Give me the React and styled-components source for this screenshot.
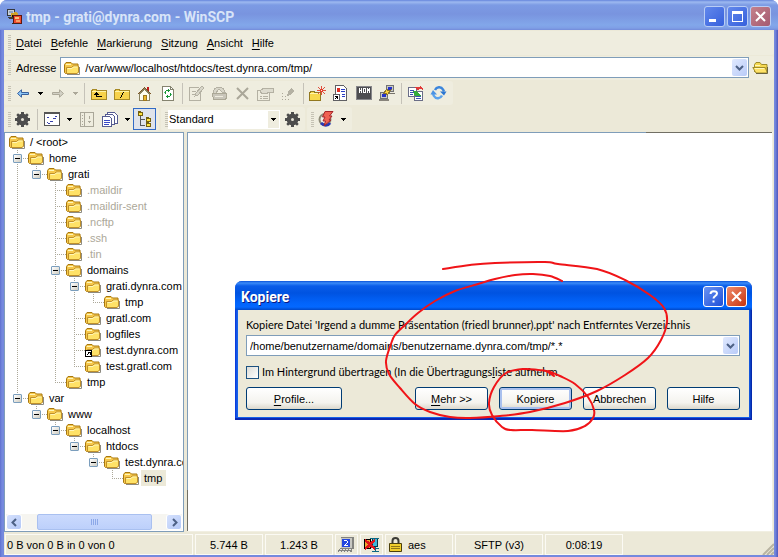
import React from 'react';
import styled, { createGlobalStyle, css } from 'styled-components';

const GlobalStyle = createGlobalStyle`
  * { box-sizing: border-box; }
  html, body { margin: 0; padding: 0; background: #fff; }
  body, button, input, select {
    font-family: "Liberation Sans", Arial, sans-serif;
    font-size: 11px;
    line-height: 14px;
    color: #000;
  }
  button, input, select { margin: 0; padding: 0; border: 0; background: none; outline: none; }
  svg { display: block; flex: none; }
`;

/* ---------- window frame ---------- */

const Window = styled.div`
  display: flex;
  flex-direction: column;
  min-height: 100vh;
  padding: 0 4px 2px;
  overflow: hidden;
  border-radius: 7px 7px 0 0;
  background: linear-gradient(90deg, #5f70cf 0, #7589de 2px, #7589de calc(100% - 3px), #5158bd 100%);
`;

const TitleBar = styled.header`
  display: flex;
  align-items: center;
  height: 30px;
  margin: 0 -4px;
  padding: 3px 7px 0 6px;
  gap: 2px;
  background: linear-gradient(#6585dc 0, #9db9f0 2px, #7c9be4 5px, #7994df 14px, #82a7ea 25px, #7f9fe6 28px, #738bda 30px);
`;

const WindowTitle = styled.h1`
  flex: 1;
  margin: 0 0 0 1px;
  font: bold 14px/18px Roboto, sans-serif;
  color: #d8e4f8;
`;

const CaptionButton = styled.button`
  display: grid;
  place-items: center;
  width: 21px;
  height: 21px;
  border: 1px solid ${(p) => (p.$active ? '#fff' : '#b9cdf5')};
  border-radius: 3px;
  background: ${(p) => p.$fill};
`;

const Chrome = styled.div`
  flex: 1;
  display: flex;
  flex-direction: column;
  background: #ece9d8;
`;

/* ---------- bars ---------- */

const Bar = styled.div`
  display: flex;
  align-items: center;
  height: ${(p) => p.$height}px;
  gap: 2px;
`;

const Group = styled.div`
  display: flex;
  align-items: center;
  height: 24px;
  padding-right: ${(p) => p.$end || 3}px;
  flex: ${(p) => (p.$wide ? '1' : 'none')};
  min-width: 0;
  border-radius: 3px;
  background: #efeddf;
`;

const Grip = styled.span`
  flex: none;
  width: 3px;
  height: 15px;
  margin: 0 0 0 4px;
  background: repeating-linear-gradient(#c5c2b4 0 1px, transparent 1px 2px);
`;

const Menu = styled.nav`
  display: flex;
  gap: 9px;
  padding-left: 5px;
`;

const MenuItem = styled.button`
  font-size: 11px;
  u { text-underline-offset: 2px; }
`;

const ToolButton = styled.button`
  display: grid;
  place-items: center;
  flex: none;
  width: ${(p) => (p.$narrow ? 12 : 23)}px;
  height: 22px;
  ${(p) => p.$pressed && css`
    border: 1px solid #316ac5;
    background: #dfe3ea;
  `}
`;

const Separator = styled.span`
  flex: none;
  width: 1px;
  height: 21px;
  margin: 0 2px 0 3px;
  background: #c5c2b8;
`;

const AddressLabel = styled.label`
  padding: 0 4px 0 5px;
`;

const ComboBox = styled.div`
  display: flex;
  align-items: center;
  flex: 1;
  min-width: 0;
  height: 21px;
  padding: 1px;
  border: 1px solid #7f9db9;
  background: #fff;
`;

const ComboInput = styled.input`
  flex: 1;
  min-width: 0;
  padding-left: ${(p) => p.$inset}px;
`;

const DropButton = styled.button`
  display: grid;
  place-items: center;
  width: 15px;
  height: 17px;
  border-radius: 2px;
  background: linear-gradient(135deg, #e0e9fe, #b9cbf8);
`;

const SelectBox = styled.div`
  display: grid;
  grid-template-columns: 100px 11px;
  height: 19px;
  margin-right: 1px;
  border: 1px solid #fff;
  border-left: 0;
  background: #efeddf;
  > select { grid-area: 1 / 1 / 2 / 3; appearance: none; padding-left: 1px; background: linear-gradient(90deg, #fff 100px, #efeddf 100px); }
  > svg { grid-area: 1 / 2; place-self: center; pointer-events: none; }
`;

/* ---------- panes ---------- */

const Panes = styled.main`
  flex: 1;
  display: grid;
  grid-template-columns: 180px 1fr;
  column-gap: 3px;
  margin-bottom: 2px;
`;

const TreePane = styled.aside`
  display: flex;
  flex-direction: column;
  justify-content: space-between;
  min-width: 0;
  padding: 1px;
  overflow: hidden;
  border: 1px solid #7f9db9;
  background: #fff;
`;

const Tree = styled.ul`
  margin: 0;
  padding: 0 0 0 3px;
  list-style: none;
`;

const TreeRow = styled.li`
  display: flex;
  align-items: center;
  height: 16px;
`;

const Guide = styled.span`
  position: relative;
  flex: none;
  display: grid;
  place-items: center start;
  width: 19px;
  height: 16px;
  padding-left: 4px;
  &::before {
    content: "";
    display: ${(p) => (p.$kind === ' ' ? 'none' : 'block')};
    position: absolute;
    left: 8px;
    top: 0;
    width: 1px;
    height: ${(p) => (p.$kind === 'L' ? 8 : 16)}px;
    background: repeating-linear-gradient(#aca899 0 1px, transparent 1px 2px);
  }
  &::after {
    content: "";
    display: ${(p) => (p.$kind === 'L' || p.$kind === 'T' ? 'block' : 'none')};
    position: absolute;
    left: 8px;
    top: 8px;
    width: 11px;
    height: 1px;
    background: repeating-linear-gradient(90deg, #aca899 0 1px, transparent 1px 2px);
  }
`;

const Expander = styled.button`
  position: relative;
  z-index: 1;
  display: grid;
  place-items: center;
  width: 9px;
  height: 9px;
  border: 1px solid #7b9ebd;
  border-radius: 1px;
  background: linear-gradient(135deg, #fff, #cfccc0);
  &::after { content: ""; width: 5px; height: 1px; background: #000; }
`;

const TreeName = styled.span`
  margin-left: 2px;
  padding: 1px 4px 1px 3px;
  white-space: nowrap;
  color: ${(p) => (p.$hidden ? '#aca899' : '#000')};
  background: ${(p) => (p.$selected ? '#ece9d8' : 'transparent')};
`;

const ScrollBar = styled.div`
  display: flex;
  justify-content: space-between;
  height: 16px;
  background: #f6f5f0;
`;

const ScrollButton = styled.button`
  display: grid;
  place-items: center;
  width: 16px;
  border: 1px solid #fff;
  border-radius: 3px;
  background: linear-gradient(135deg, #d5e1fd, #b5c9f7);
`;

const ScrollTrack = styled.div`
  flex: 1;
  display: grid;
  padding: 0 14px 0 15px;
`;

const ScrollThumb = styled.div`
  display: grid;
  place-items: center;
  border: 1px solid #a9c0f0;
  border-radius: 2px;
  background: linear-gradient(#cbdafd, #bdd0fb);
`;

const FilePane = styled.section`
  position: relative;
  min-width: 0;
  margin-right: 1px;
  border: 1px solid #f1efe2;
  border-width: 0 1px 1px 0;
  background:
    linear-gradient(#7f9db9 calc(100% - 41px), #716f64 0) left / 1px 100% no-repeat,
    linear-gradient(90deg, #7f9db9 calc(100% - 126px), #716f64 0) top / 100% 1px no-repeat,
    #fff;
`;

const StatusBar = styled.footer`
  display: flex;
  height: 21px;
  gap: 2px;
  padding-left: 1px;
`;

const StatusCell = styled.span`
  display: flex;
  align-items: center;
  justify-content: ${(p) => (p.$left ? 'flex-start' : 'center')};
  gap: 6px;
  flex: none;
  width: ${(p) => p.$width}px;
  padding-left: ${(p) => (p.$left ? p.$left : 0)}px;
  border: 1px solid #fbfaf4;
  white-space: nowrap;
`;

const SizeGrip = styled.span`
  display: flex;
  align-items: flex-end;
  margin-left: auto;
`;

/* ---------- dialog ---------- */

const DialogLayer = styled.div`
  position: absolute;
  left: 48px;
  right: 20px;
  top: 149px;
`;

const Dialog = styled.form`
  padding: 0 3px 3px;
  border-radius: 7px 7px 0 0;
  overflow: hidden;
  background: linear-gradient(90deg, #0831d9 0, #1660e8 2px, #1660e8 calc(100% - 3px), #001ea0 100%);
  box-shadow: inset 0 -2px #0a28b4;
`;

const DialogTitleBar = styled.div`
  display: flex;
  align-items: center;
  height: 29px;
  margin: 0 -3px;
  padding: 2px 5px 0 6px;
  gap: 2px;
  background: linear-gradient(#0a50d8 0, #3b8bf8 2px, #0a5ce8 5px, #0053e1 12px, #0264fb 22px, #0468ff 26px, #0048c8 29px);
`;

const DialogTitle = styled.h2`
  flex: 1;
  margin: 0;
  font: bold 14px/18px Roboto, sans-serif;
  color: #fff;
  text-shadow: 1px 1px #0a1883;
`;

const DialogBody = styled.div`
  display: flex;
  flex-direction: column;
  padding: 8px 9px 7px 8px;
  background: #ece9d8;
`;

const DialogLabel = styled.label`
  margin-bottom: 3px;
  font-family: Lato, "Liberation Sans", sans-serif;
  white-space: nowrap;
`;

const CheckLabel = styled.label`
  display: flex;
  align-items: center;
  gap: 3px;
  margin: 9px 0 8px;
  font-family: Lato, "Liberation Sans", sans-serif;
  white-space: nowrap;
`;

const Check = styled.input`
  appearance: none;
  width: 13px;
  height: 13px;
  border: 1px solid #1c5180;
  background: linear-gradient(135deg, #dcdcd7, #fff);
`;

const Buttons = styled.div`
  display: flex;
  gap: 11px;
`;

const PushButton = styled.button`
  width: ${(p) => (p.$wide ? 96 : 73)}px;
  height: 23px;
  margin-right: ${(p) => (p.$wide ? 'auto' : '0')};
  border: 1px solid #003c74;
  border-radius: 3px;
  background: linear-gradient(#fff, #f4f3ee 70%, #dcd8cc);
  box-shadow: ${(p) => (p.$default ? 'inset 0 0 0 2px #a9c0ee' : 'none')};
  u { text-underline-offset: 2px; }
`;

const Marker = styled.svg`
  position: absolute;
  left: 145px;
  top: -26px;
  pointer-events: none;
`;

/* ---------- icons ---------- */

const Pic = ({ w = 16, h = 16, smooth, children }) => (
  <svg width={w} height={h} viewBox={`0 0 ${w} ${h}`} fill="none" aria-hidden="true" shapeRendering={smooth ? 'auto' : 'crispEdges'}>
    {children}
  </svg>
);

const Folder = ({ link }) => (
  <Pic h={14} smooth>
    <path d="M3 13.5h12.5V6" stroke="#8d8a80" />
    <path d="M.5 11.500V3.500l1.500-2h5l1.500 1.500H14v8.500l-1 1H1.500z" fill="#f6c84c" stroke="#a8780f" />
    <path d="M2.500 12V6.500h5L9 5h5.500v6L13 12.500H2.500z" fill="#ffe267" stroke="#c0902a" />
    <path d="M3.500 7.500h4.500l1.500-1.500h4M2 3.500h5" stroke="#fff6b8" />
    {link && (
      <g shapeRendering="crispEdges">
        <path d="M.5 7.500h6v6h-6z" fill="#fff" stroke="#000" />
        <path d="M2 12l3-3M2.500 9.500H5V12" stroke="#000" />
      </g>
    )}
  </Pic>
);

const OpenFolder = () => (
  <Pic w={17} h={14} smooth>
    <path d="M2.500 11V3.500L4 1.500h4l1.500 2H15v7" fill="#f5d851" stroke="#a08c2a" />
    <path d="M.8 6.500h12.500l2 5.500H4z" fill="#ffe36a" stroke="#a08c2a" />
    <path d="M4 12.500h11.500V6" stroke="#6b6440" />
    <path d="M3 4.500h5M3 7.500h9" stroke="#fff7bb" />
  </Pic>
);

const AppIcon = () => (
  <Pic w={17} h={17}>
    <path d="M1 1h8v6H1z" fill="#c9cfd8" />
    <path d="M1.500 1.500h7v6h-7z" stroke="#35383e" />
    <path d="M3 3h4v2H3z" fill="#8fa2bf" />
    <path d="M2 9h8v2H3z" fill="#403c38" />
    <path d="M5 5l5-1 2 2-3 4-4-1z" fill="#d2a229" />
    <path d="M6 7h4v2H6z" fill="#17140e" />
    <path d="M7.500 7.500h8v8h-8z" fill="#ef4b2c" stroke="#5d1610" />
    <path d="M9 9h4v2H9z" fill="#f8c07d" />
    <path d="M10 12h4v2h-4z" fill="#f7a068" />
    <path d="M6 15h8v1H6z" fill="#42251e" />
  </Pic>
);

const Caret = ({ dim }) => (
  <Pic w={5} h={3}><path d="M0 0h5v1H0zM1 1h3v1H1zM2 2h1v1H2z" fill={dim ? '#aca899' : '#000'} /></Pic>
);

const Chevron = ({ dir = 'down' }) => (
  <svg width="9" height="9" viewBox="0 0 9 9" aria-hidden="true">
    <path d={{ down: 'M1 3l3.500 3.500L8 3', left: 'M6 1L2.500 4.500 6 8', right: 'M3 1l3.500 3.500L3 8' }[dir]} fill="none" stroke="#4d6185" strokeWidth="2" />
  </svg>
);

const Arrow = ({ right }) => (
  <Pic w={12} h={9} smooth>
    <path
      d={right ? 'M11.500 4.500L7.500.8v2.700H.5v2h7v2.700z' : 'M.5 4.500L4.500.8v2.700h7v2h-7v2.700z'}
      fill={right ? '#d3d1c5' : '#8cc6f8'}
      stroke={right ? '#aca899' : '#38609c'}
    />
  </Pic>
);

const DirFolder = ({ slash }) => (
  <Pic h={13}>
    <path d="M.5 12.500v-9h1v-1h4v1h10v9z" fill="#f7d24b" stroke="#a88a26" />
    <path d="M1 4.500h14" stroke="#fff3a4" />
    {slash ? (
      <path d="M9 5h1v1H9zM8 6h1v2H8zM7 8h1v2H7zM6 10h1v1H6z" fill="#000" />
    ) : (
      <path d="M5 5h1v1H5zM4 6h3v1H4zM3 7h5v1H3zM5 8h1v2H5zM5 9h6v1H5z" fill="#000" />
    )}
  </Pic>
);

const HomeIcon = () => (
  <Pic w={15} h={15}>
    <path d="M10 1h2v4h-2z" fill="#c01818" />
    <path d="M2.500 8v6.500h10V8L7.500 3z" fill="#fffdf0" stroke="#8a815e" />
    <path d="M.5 8.500l7-7 7 7" stroke="#7a5324" />
    <path d="M6.500 9.500h3v5h-3z" fill="#eeb92d" stroke="#9c761e" />
  </Pic>
);

const PageRefresh = () => (
  <Pic w={14} h={15}>
    <path d="M1.500.5h8l3 3v11h-11z" fill="#fff" stroke="#85836f" />
    <path d="M9.500.5v3h3" stroke="#85836f" />
    <path d="M4 5h1v3H4zM5 4h2v1H5zM7 3h1v3H7zM8 4h1v1H8zM9 7h1v3H9zM7 10h2v1H7zM6 9h1v3H6zM5 10h1v1H5z" fill="#169436" />
    <path d="M3 6h1v1H3zM10 8h1v1h-1z" fill="#5cc77a" />
  </Pic>
);

const EditIcon = () => (
  <Pic w={16} h={16}>
    <path d="M9.500 2.500h-9v13h11V8" stroke="#b4b1a3" />
    <path d="M3 6h4M3 9h3" stroke="#b4b1a3" />
    <path d="M6 11l1-3 6-7 2 2-6 7z" stroke="#b4b1a3" fill="#d8d6c9" />
  </Pic>
);

const DocIcon = () => (
  <Pic w={17} h={15}>
    <path d="M2 7c0-4 3-6 6-6s5 2 6 5h-3L8 3 5 7z" fill="#d8d6c9" stroke="#b4b1a3" />
    <path d="M1.500 7.500h14v5l-2 1h-11z" fill="#c9c6ba" stroke="#aba896" />
    <path d="M4 10.500h8" stroke="#efeddf" />
  </Pic>
);

const DeleteIcon = () => (
  <Pic w={13} h={13} smooth><path d="M1 1l11 11M12 1L1 12" stroke="#aaa799" strokeWidth="2" /></Pic>
);

const PropsIcon = () => (
  <Pic w={17} h={15}>
    <path d="M.5 4.500h12v10H.5z" stroke="#b4b1a3" />
    <path d="M3 10.500h2M6 10.500h5M3 12.500h2M6 12.500h5" stroke="#b4b1a3" />
    <path d="M3 5l4-3h9v4h-4l-3 2-2-1-2 1z" fill="#dddbce" stroke="#b4b1a3" />
  </Pic>
);

const PenIcon = () => (
  <Pic w={13} h={13}>
    <path d="M5 9l1-4 3-4 3 3-4 4z" fill="#b4b1a3" />
    <path d="M0 6h1v1H0zM0 9h1v1H0zM0 12h1v1H0zM3 9h1v1H3zM3 12h1v1H3zM6 12h1v1H6z" fill="#aca899" />
  </Pic>
);

const NewFolder = () => (
  <Pic w={17} h={15}>
    <path d="M.5 14.500v-8h1v-1h4v1h6v8z" fill="#f8d94e" stroke="#92781f" />
    <path d="M1 7.500h10" stroke="#fff5ac" />
    <path d="M12 0h1v3h-1zM12 6h1v3h-1zM8 4h3v1H8zM14 4h3v1h-3zM9 1h1v1H9zM10 2h1v1h-1zM15 1h1v1h-1zM14 2h1v1h-1zM9 7h1v1H9zM10 6h1v1h-1zM14 6h1v1h-1zM15 7h1v1h-1z" fill="#e0503e" />
    <path d="M11 3h3v3h-3z" fill="#e23c2c" />
    <path d="M12 4h1v1h-1z" fill="#fff3d8" />
  </Pic>
);

const LinkDoc = () => (
  <Pic w={15} h={16}>
    <path d="M2.500.500h8l3 3v12h-11z" fill="#fff" stroke="#5f5f63" />
    <path d="M4 3h3v4H4z" fill="#e12e22" />
    <path d="M8 4.500h4M8 6.500h4M9 9.500h3M9 11.500h3" stroke="#2b3ec5" />
    <path d="M.500 9.500h6v6h-6z" fill="#fff" stroke="#5f5f63" />
    <path d="M2 13h1v1H2zM3 12h1v1H3zM4 11h1v3H4zM2 11h2v1H2z" fill="#000" />
  </Pic>
);

const Terminal = () => (
  <Pic w={16} h={14}>
    <path d="M.5.5h15v13H.5z" fill="#4e4e52" stroke="#86868a" />
    <path d="M3.500 2v5M5.500 2v5M4 4.500h1M7.500 2v5M9.500 2v5M8 2.500h1M8 6.500h1M11.500 2v5M13.500 2v5M12.500 3v2" stroke="#fff" />
  </Pic>
);

const Putty = () => (
  <Pic w={16} h={16}>
    <path d="M7.500.5h7v6h-7z" fill="#c9c9c5" stroke="#727272" />
    <path d="M9 2h4v3H9z" fill="#2432c8" />
    <path d="M7 8.500h9" stroke="#77736b" />
    <path d="M1.500 7.500h7v6h-7z" fill="#c9c9c5" stroke="#727272" />
    <path d="M3 9h4v3H3z" fill="#2432c8" />
    <path d="M0 15h10" stroke="#88847b" strokeWidth="2" />
    <path d="M5 8l3-4 1 2 3-1-4 5-1-2z" fill="#ffd53a" stroke="#8b7431" />
  </Pic>
);

const SyncIcon = () => (
  <Pic w={16} h={15}>
    <path d="M.5 1.500h8v9h-8zM6.500 5.500h8v9h-8z" fill="#fff" stroke="#6a6d87" />
    <path d="M2 4.500h4M2 6.500h4M2 8.500h3M8 10.500h5M8 12.500h5" stroke="#3b50b2" />
    <path d="M6 1h5l1-1 3 2v3l-2-2-4 1z" fill="#e23a38" />
    <path d="M5 5h4l4 5H7z" fill="#33ad3a" />
  </Pic>
);

const BlueRefresh = () => (
  <Pic w={17} h={16} smooth>
    <path d="M5 5c1.500-3 6-4 8-.5l1 2" stroke="#3c86dc" strokeWidth="2.500" />
    <path d="M12 10.500c-1.500 3-6 4-8 .5l-1-2" stroke="#5ba2ec" strokeWidth="2.500" />
    <path d="M10 6.500h6.500L14 10.500z" fill="#2b76d2" />
    <path d="M.5 9.500H7L3 5z" fill="#4b93e4" />
  </Pic>
);

const Gear = () => (
  <Pic w={15} h={15} smooth>
    <path d="M6 0h3v2l1.500.6L12 1.300 13.700 3l-1.300 1.500L13 6h2v3h-2l-.6 1.500 1.300 1.500-1.700 1.700-1.500-1.300L9 13v2H6v-2l-1.500-.6L3 13.700 1.300 12l1.300-1.500L2 9H0V6h2l.6-1.500L1.300 3 3 1.300l1.500 1.300L6 2z" fill="#4c4c4c" />
    <circle cx="7.500" cy="7.500" r="5.500" fill="#4c4c4c" />
    <circle cx="7.500" cy="7.500" r="1.500" fill="#e4e2d6" />
  </Pic>
);

const QueueIcon = () => (
  <Pic w={16} h={14}>
    <path d="M.5.5h15v13H.5z" fill="#fff" stroke="#555" />
    <path d="M0 1.500h16" stroke="#555" />
    <path d="M3 5h2v1H3zM3 10h1v1H3zM6 9h3v1H6zM9 6h3v1H9zM11 4h2v1h-2zM4 11h2v1H4z" fill="#3841aa" />
  </Pic>
);

const LogIcon = () => (
  <Pic w={14} h={15}>
    <path d="M.5.5h13v14H.5zM4.500 0v15" stroke="#aaa799" />
    <path d="M2 3.500h1M2 6.500h1M2 9.500h1M2 12.500h1M9.500 4v3M9.500 9v2M8 9.500h3" stroke="#aaa799" />
  </Pic>
);

const CopyPages = () => (
  <Pic w={16} h={15}>
    <path d="M5.500.500h7l3 3v8h-10z" fill="#fff" stroke="#555b91" />
    <path d="M3.500 2.500h7l2 2v8h-9z" fill="#fff" stroke="#555b91" />
    <path d="M.5 4.500h7l2 2v8h-9z" fill="#fff" stroke="#555b91" />
    <path d="M2 8.500h6M2 10.500h6M2 12.500h5" stroke="#3949c6" />
  </Pic>
);

const TreeIcon = () => (
  <Pic w={15} h={16}>
    <path d="M3.500 5v9.500H8M3.500 8.500H8" stroke="#585858" />
    <path d="M1 0h2l1 1h2v4H1zM9 6h2l1 1h2v4H9zM9 11h2l1 1h2v4H9z" fill="#75600c" />
    <path d="M2 2h3v2H2zM10 8h3v2h-3zM10 13h3v2h-3z" fill="#ffe43e" />
  </Pic>
);

const Lightning = () => (
  <Pic w={16} h={16} smooth>
    <circle cx="7" cy="8.500" r="5.500" fill="#f2f0e8" stroke="#8c8976" strokeWidth="2" />
    <path d="M3 12c3 3 7 3 9 0" stroke="#2838b5" strokeWidth="3" />
    <path d="M7 .5h8L11.500 5H14l-3 4h2l-7 6 1.500-5H5l2-4H4.500z" fill="#f06253" stroke="#a5252a" />
  </Pic>
);

const Computer = () => (
  <Pic w={17} h={16}>
    <path d="M3 0h13v12h-2v3H0v-2l3-2z" fill="#83837f" />
    <path d="M3 1h11v10H3z" fill="#c8c8c2" />
    <path d="M4 2h8v8H4z" fill="#2347df" />
    <path d="M6 3h3v1H6zM9 4h1v2H9zM8 6h1v1H8zM7 7h1v1H7zM6 8h4v1H6z" fill="#fff" />
    <path d="M2 12.500h12M1 14.500h12" stroke="#e6e6e0" strokeDasharray="2 1" />
  </Pic>
);

const NoCompress = () => (
  <Pic w={17} h={16}>
    <path d="M1.500 2.500h6v9h-6z" fill="#eca82d" stroke="#000" />
    <path d="M9.500 1.500h5v8h-5z" fill="#3fb4d6" stroke="#063a4a" />
    <path d="M7 1.500h9M10 11.500h6M12.500 10v5M9 14.500h7" stroke="#0d6883" />
    <path d="M2 3l10 9M12 3L2 12" stroke="#e0141a" strokeWidth="2.500" />
  </Pic>
);

const Lock = () => (
  <Pic w={13} h={15} smooth>
    <path d="M3.500 7V4c0-4 6-4 6 0v3" stroke="#3c3c36" strokeWidth="2" />
    <path d="M.5 6.500h12v8H.5z" fill="#f1ce2c" stroke="#4a3f0b" />
    <path d="M2 9.500h9M2 11.500h9" stroke="#8f7718" />
  </Pic>
);

/* ---------- data ---------- */

/* Each guide letter is one indent cell: | line, T tee, L elbow; "open" rows end in an expander. */
const rows = [
  { name: '/ <root>', guides: '' },
  { name: 'home', guides: 'T', open: true },
  { name: 'grati', guides: '|L', open: true },
  { name: '.maildir', guides: '| T', hidden: true },
  { name: '.maildir-sent', guides: '| T', hidden: true },
  { name: '.ncftp', guides: '| T', hidden: true },
  { name: '.ssh', guides: '| T', hidden: true },
  { name: '.tin', guides: '| T', hidden: true },
  { name: 'domains', guides: '| T', open: true },
  { name: 'grati.dynra.com', guides: '| |T', open: true },
  { name: 'tmp', guides: '| ||L' },
  { name: 'gratl.com', guides: '| |T' },
  { name: 'logfiles', guides: '| |T' },
  { name: 'test.dynra.com', guides: '| |T', link: true },
  { name: 'test.gratl.com', guides: '| |L' },
  { name: 'tmp', guides: '| L' },
  { name: 'var', guides: 'L', open: true },
  { name: 'www', guides: ' L', open: true },
  { name: 'localhost', guides: '  L', open: true },
  { name: 'htdocs', guides: '   L', open: true },
  { name: 'test.dynra.com', guides: '    L', open: true },
  { name: 'tmp', guides: '     L', selected: true },
];

const menu = ['Datei', 'Befehle', 'Markierung', 'Sitzung', 'Ansicht', 'Hilfe'];

const bigLoop = [
  [443, 269], [470, 265], [495, 263], [545, 262], [558, 264], [597, 269], [625, 280], [650, 295], [664, 308],
  [667, 322], [661, 340], [648, 358], [625, 375], [597, 391], [565, 403], [530, 412], [500, 416], [470, 418],
  [450, 417], [430, 412], [415, 404], [400, 388], [389, 374], [386, 361], [391, 344], [395, 335], [405, 325],
  [418, 313], [435, 301], [455, 291], [478, 284], [495, 279], [515, 275], [533, 274], [550, 276], [562, 281],
];

const smallLoop = [
  [554, 376], [546, 371], [538, 370], [524, 369], [506, 373], [494, 387], [489, 403], [492, 415], [502, 427],
  [511, 430], [532, 430], [568, 431], [585, 426], [593, 418], [594, 410], [588, 397], [575, 384], [560, 376], [548, 371],
];

const smooth = (pts) =>
  pts.slice(1).reduce((d, p, i) => {
    const a = pts[Math.max(i - 1, 0)];
    const b = pts[i];
    const n = pts[Math.min(i + 2, pts.length - 1)];
    return `${d} C${b[0] + (p[0] - a[0]) / 6} ${b[1] + (p[1] - a[1]) / 6} ${p[0] - (n[0] - b[0]) / 6} ${p[1] - (n[1] - b[1]) / 6} ${p[0]} ${p[1]}`;
  }, `M${pts[0][0]} ${pts[0][1]}`);

const Tool = ({ label, children, ...rest }) => (
  <ToolButton type="button" aria-label={label} {...rest}>{children}</ToolButton>
);

const Combo = ({ id, value, icon, inset }) => (
  <ComboBox>
    {icon}
    <ComboInput id={id} defaultValue={value} $inset={inset} spellCheck={false} />
    <DropButton type="button" aria-label="Liste öffnen"><Chevron /></DropButton>
  </ComboBox>
);

const AddressIcon = styled.span`
  padding-left: 2px;
`;

export default function App() {
  return (
    <>
      <GlobalStyle />
      <Window>
        <TitleBar>
          <AppIcon />
          <WindowTitle>tmp - grati@dynra.com - WinSCP</WindowTitle>
          <CaptionButton aria-label="Minimieren" $fill="linear-gradient(135deg, #6288ec, #3660dc)">
            <Pic w={11} h={11}><path d="M0 8h7v3H0z" fill="#fff" /></Pic>
          </CaptionButton>
          <CaptionButton aria-label="Maximieren" $fill="linear-gradient(135deg, #6288ec, #3660dc)">
            <Pic w={11} h={11}><path d="M.5.5h10v10H.5zM0 1.500h11M0 2.500h11" stroke="#fff" /></Pic>
          </CaptionButton>
          <CaptionButton aria-label="Schließen" $fill="linear-gradient(135deg, #c4818c, #a55a70)">
            <Pic w={11} h={11} smooth><path d="M1 1l9 9M10 1l-9 9" stroke="#fff" strokeWidth="2" /></Pic>
          </CaptionButton>
        </TitleBar>

        <Chrome>
          <Bar $height={25}>
            <Group $wide>
              <Grip />
              <Menu>
                {menu.map((m) => <MenuItem key={m} type="button"><u>{m[0]}</u>{m.slice(1)}</MenuItem>)}
              </Menu>
            </Group>
          </Bar>
          <Bar $height={25}>
            <Group $wide $end={2}>
              <Grip />
              <AddressLabel htmlFor="address">Adresse</AddressLabel>
              <Combo id="address" value="/var/www/localhost/htdocs/test.dynra.com/tmp/" icon={<AddressIcon><Folder /></AddressIcon>} inset={5} />
              <Tool label="Verzeichnis öffnen"><OpenFolder /></Tool>
            </Group>
          </Bar>
          <Bar $height={26}>
            <Group>
              <Grip />
              <Tool label="Zurück"><Arrow /></Tool>
              <Tool label="Zurück-Liste" $narrow><Caret /></Tool>
              <Tool label="Vorwärts"><Arrow right /></Tool>
              <Tool label="Vorwärts-Liste" $narrow><Caret dim /></Tool>
              <Separator />
              <Tool label="Übergeordnet"><DirFolder /></Tool>
              <Tool label="Wurzel"><DirFolder slash /></Tool>
              <Tool label="Home"><HomeIcon /></Tool>
              <Tool label="Aktualisieren"><PageRefresh /></Tool>
              <Separator />
              <Tool label="Bearbeiten"><EditIcon /></Tool>
              <Tool label="Kopieren"><DocIcon /></Tool>
              <Tool label="Löschen"><DeleteIcon /></Tool>
              <Tool label="Eigenschaften"><PropsIcon /></Tool>
              <Tool label="Umbenennen"><PenIcon /></Tool>
              <Separator />
              <Tool label="Neuer Ordner"><NewFolder /></Tool>
              <Tool label="Link erstellen"><LinkDoc /></Tool>
              <Tool label="Terminal"><Terminal /></Tool>
              <Tool label="PuTTY"><Putty /></Tool>
              <Separator />
              <Tool label="Synchronisieren"><SyncIcon /></Tool>
              <Tool label="Abgleichen"><BlueRefresh /></Tool>
            </Group>
          </Bar>
          <Bar $height={26}>
            <Group>
              <Grip />
              <Tool label="Einstellungen"><Gear /></Tool>
              <Separator />
              <Tool label="Warteschlange"><QueueIcon /></Tool>
              <Tool label="Warteschlange-Liste" $narrow><Caret /></Tool>
              <Tool label="Protokoll"><LogIcon /></Tool>
              <Tool label="Ansicht"><CopyPages /></Tool>
              <Tool label="Ansicht-Liste" $narrow><Caret /></Tool>
              <Tool label="Baum" $pressed aria-pressed="true"><TreeIcon /></Tool>
            </Group>
            <Group $end={1}>
              <Grip />
              <SelectBox>
                <select aria-label="Übertragungseinstellungen" defaultValue="Standard"><option>Standard</option></select>
                <Caret />
              </SelectBox>
              <Tool label="Übertragungsoptionen"><Gear /></Tool>
            </Group>
            <Group>
              <Grip />
              <Tool label="Sitzungen"><Lightning /></Tool>
              <Tool label="Sitzungsliste" $narrow><Caret /></Tool>
            </Group>
          </Bar>

          <Panes>
            <TreePane>
              <Tree role="tree">
                {rows.map((r, i) => (
                  <TreeRow key={i} role="treeitem" aria-selected={!!r.selected}>
                    {[...r.guides].map((g, k) => (
                      <Guide key={k} $kind={g}>
                        {r.open && k === r.guides.length - 1 && <Expander type="button" aria-label={`${r.name} zuklappen`} />}
                      </Guide>
                    ))}
                    <Folder link={r.link} />
                    <TreeName $hidden={r.hidden} $selected={r.selected}>{r.name}</TreeName>
                  </TreeRow>
                ))}
              </Tree>
              <ScrollBar>
                <ScrollButton type="button" aria-label="Nach links"><Chevron dir="left" /></ScrollButton>
                <ScrollTrack>
                  <ScrollThumb>
                    <Pic w={8} h={6}><path d="M.5 0v6M2.500 0v6M4.500 0v6M6.500 0v6" stroke="#8ca8e8" /></Pic>
                  </ScrollThumb>
                </ScrollTrack>
                <ScrollButton type="button" aria-label="Nach rechts"><Chevron dir="right" /></ScrollButton>
              </ScrollBar>
            </TreePane>

            <FilePane>
              <DialogLayer>
                <Dialog onSubmit={(e) => e.preventDefault()}>
                  <DialogTitleBar>
                    <DialogTitle>Kopiere</DialogTitle>
                    <CaptionButton type="button" aria-label="Hilfe" $active $fill="linear-gradient(135deg, #6a93f2, #1f4fd8)">
                      <Pic w={11} h={13} smooth>
                        <path d="M2.500 4c0-4 6.500-3.500 6.500-.5 0 2.500-3.500 2.500-3.500 5M5.500 10.500v2" stroke="#fff" strokeWidth="2" />
                      </Pic>
                    </CaptionButton>
                    <CaptionButton type="button" aria-label="Schließen" $active $fill="linear-gradient(135deg, #f08c6c, #c83410)">
                      <Pic w={11} h={11} smooth><path d="M1 1l9 9M10 1l-9 9" stroke="#fff" strokeWidth="2" /></Pic>
                    </CaptionButton>
                  </DialogTitleBar>
                  <DialogBody>
                    <DialogLabel htmlFor="target">Kopiere Datei 'Irgend a dumme Präsentation (friedl brunner).ppt' nach Entferntes Verzeichnis</DialogLabel>
                    <Combo id="target" value="/home/benutzername/domains/benutzername.dynra.com/tmp/*.*" inset={2} />
                    <CheckLabel>
                      <Check type="checkbox" />
                      <span>Im Hintergrund übertragen (In die Übertragungs<u>l</u>iste aufnehm</span>
                    </CheckLabel>
                    <Buttons>
                      <PushButton type="button" $wide><u>P</u>rofile...</PushButton>
                      <PushButton type="button"><u>M</u>ehr &gt;&gt;</PushButton>
                      <PushButton type="submit" $default>Kopiere</PushButton>
                      <PushButton type="button">Abbrechen</PushButton>
                      <PushButton type="button">Hilfe</PushButton>
                    </Buttons>
                  </DialogBody>
                </Dialog>
                <Marker width="300" height="180" viewBox="380 255 300 180" fill="none" stroke="#f01418" strokeWidth="2" strokeLinecap="round" strokeLinejoin="round" aria-hidden="true">
                  <path d={smooth(bigLoop)} />
                  <path d={smooth(smallLoop)} />
                </Marker>
              </DialogLayer>
            </FilePane>
          </Panes>

          <StatusBar>
            <StatusCell $width={188} $left={1}>0 B von 0 B in 0 von 0</StatusCell>
            <StatusCell $width={68}>5.744 B</StatusCell>
            <StatusCell $width={68}>1.243 B</StatusCell>
            <StatusCell $width={23}><Computer /></StatusCell>
            <StatusCell $width={23}><NoCompress /></StatusCell>
            <StatusCell $width={68} $left={3}><Lock />aes</StatusCell>
            <StatusCell $width={88}>SFTP (v3)</StatusCell>
            <StatusCell $width={78}>0:08:19</StatusCell>
            <SizeGrip>
              <Pic w={12} h={12} smooth><path d="M1 12L12 1M5 12l7-7M9 12l3-3" stroke="#b8b4a2" strokeWidth="2" /></Pic>
            </SizeGrip>
          </StatusBar>
        </Chrome>
      </Window>
    </>
  );
}
